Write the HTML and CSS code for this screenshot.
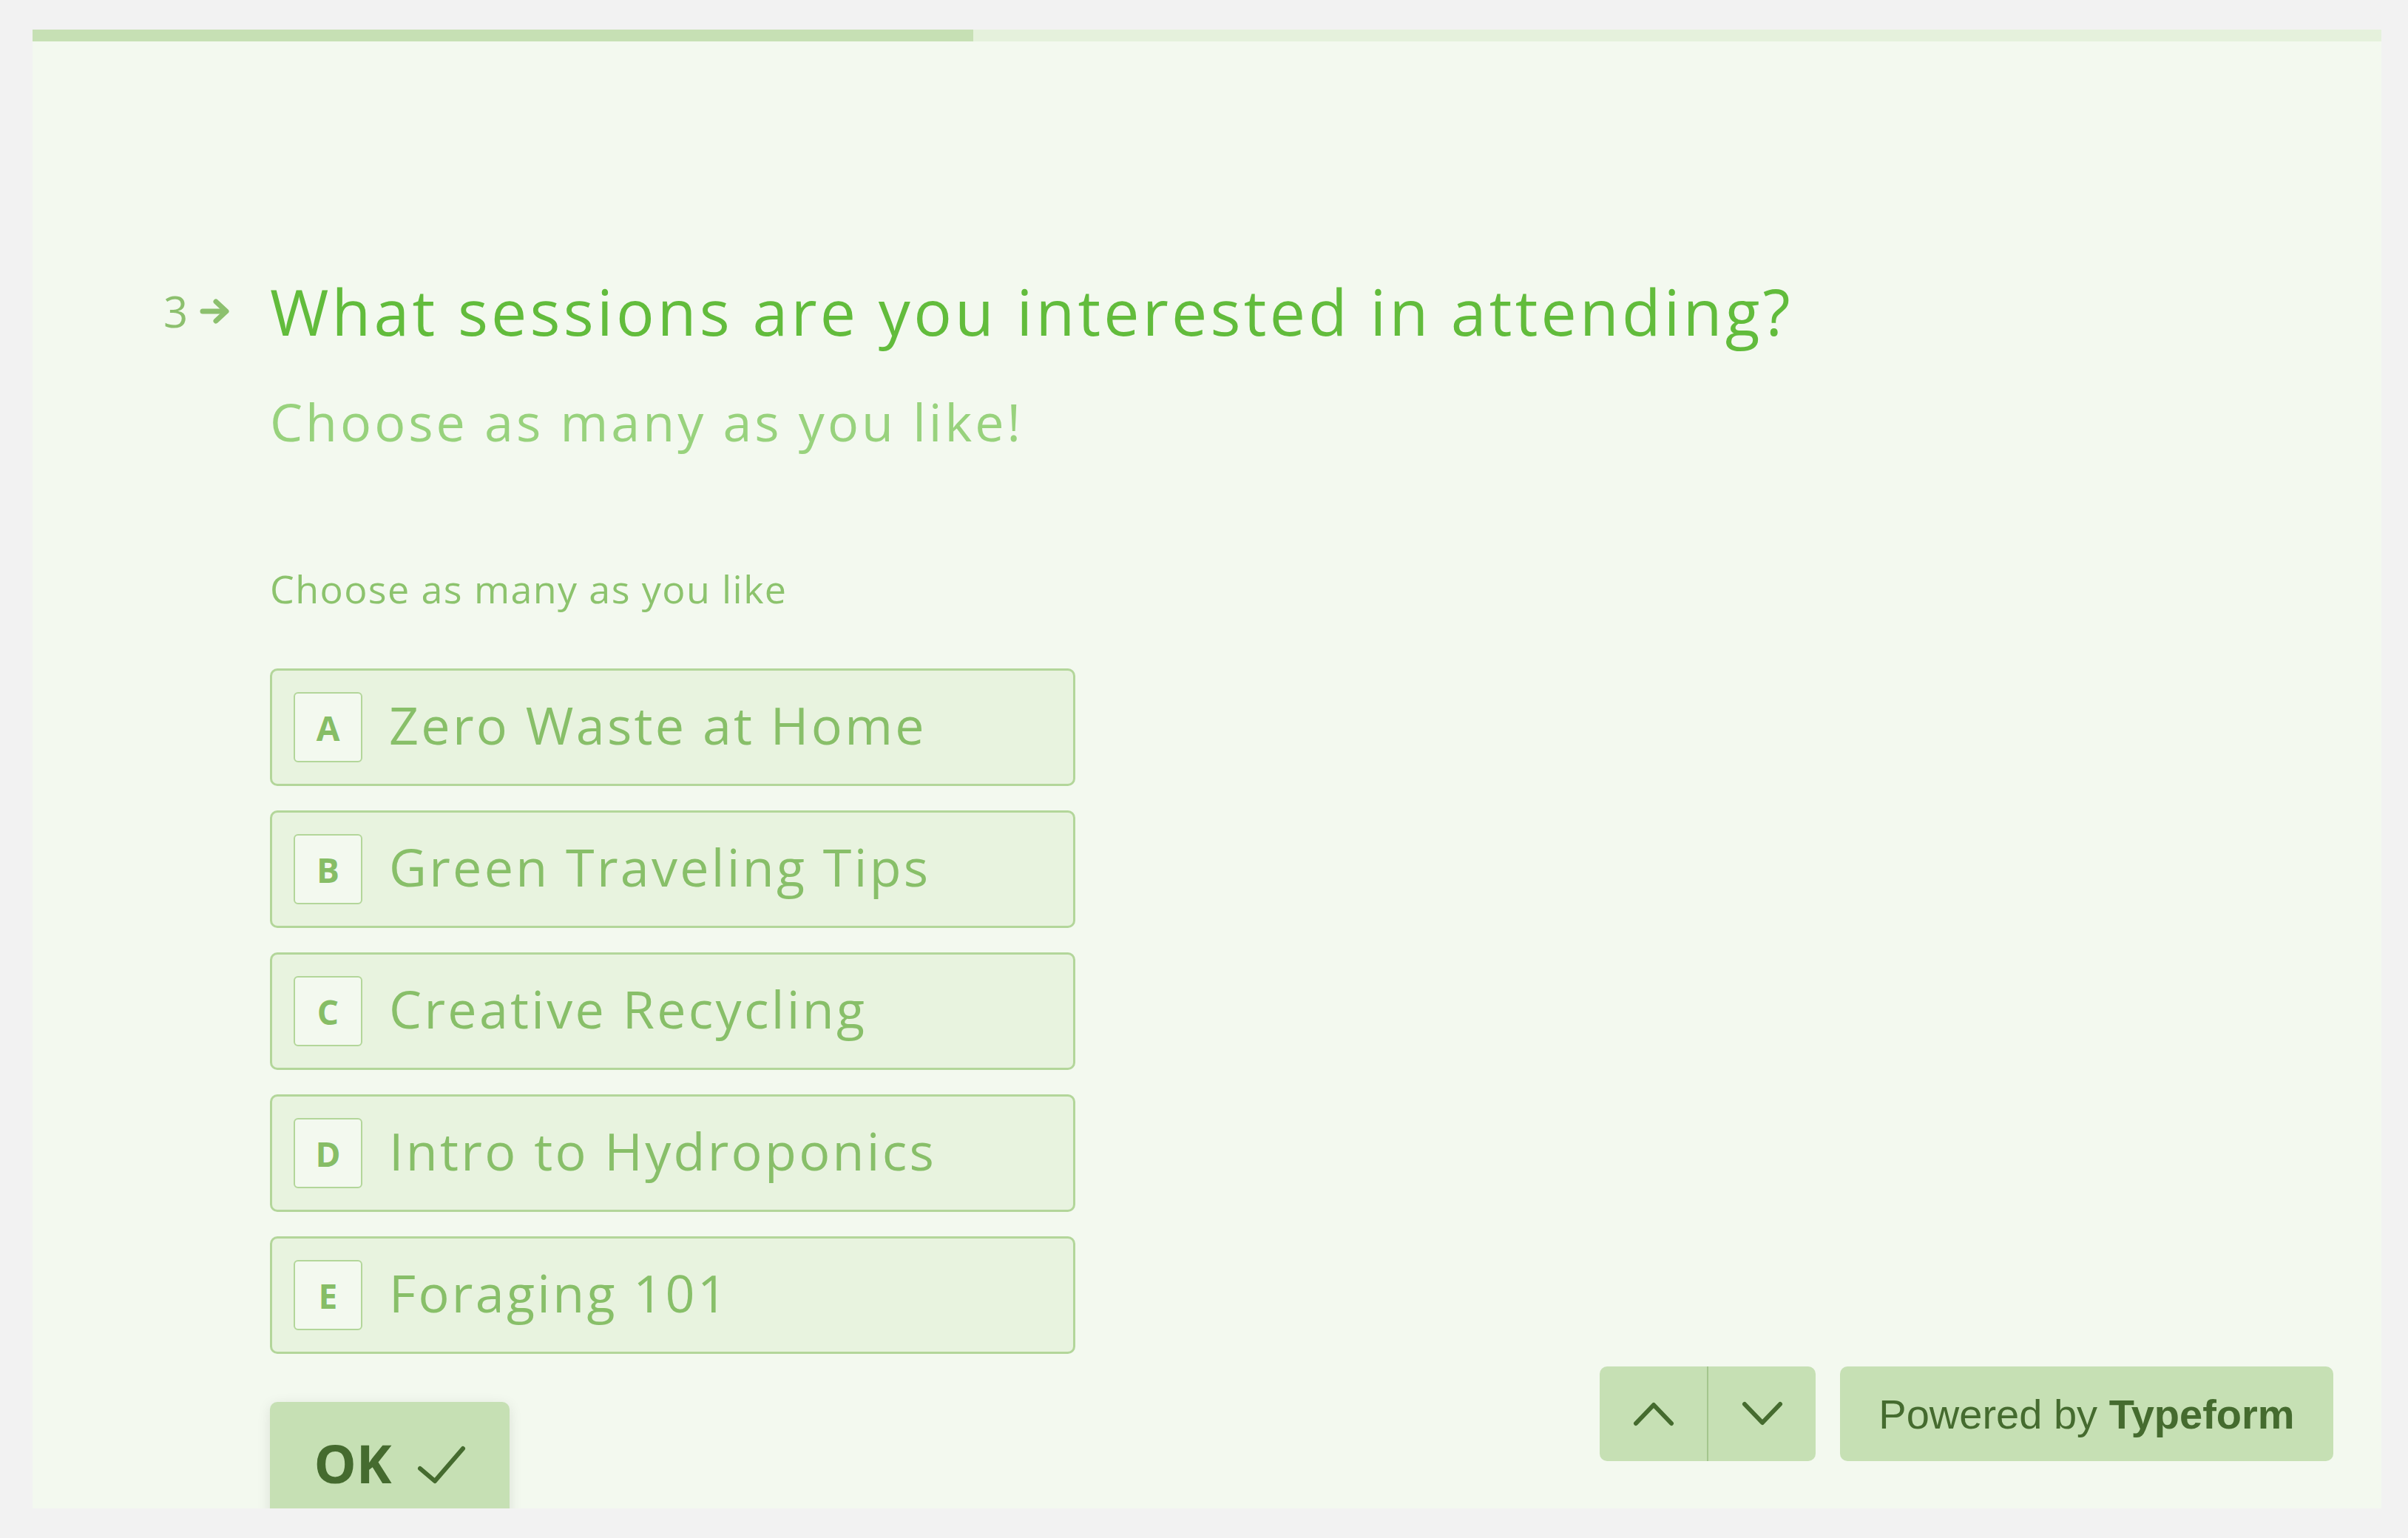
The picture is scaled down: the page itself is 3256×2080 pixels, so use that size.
FILE: index.html
```html
<!DOCTYPE html>
<html lang="en">
<head>
<meta charset="utf-8">
<title>Typeform question</title>
<link rel="stylesheet" href="styles.css">
</head>
<body>
<main class="frame">
  <div class="progress"><div class="progress-fill"></div></div>
  <section class="question">
    <div class="q-number">
      <span class="q-num">3</span>
      <svg class="q-arrow" viewBox="0 0 42 36" width="42" height="36" aria-hidden="true">
        <path d="M4 18 H34" fill="none" stroke="currentColor" stroke-width="7" stroke-linecap="round"/>
        <path d="M22 5 L36 18 L22 31" fill="none" stroke="currentColor" stroke-width="7" stroke-linecap="round" stroke-linejoin="round"/>
      </svg>
    </div>
    <div class="q-body">
      <h1 class="q-title">What sessions are you interested in attending?</h1>
      <p class="q-desc">Choose as many as you like!</p>
      <p class="q-helper">Choose as many as you like</p>
      <ul class="choices">
        <li class="choice"><span class="key">A</span><span class="label">Zero Waste at Home</span></li>
        <li class="choice"><span class="key">B</span><span class="label">Green Traveling Tips</span></li>
        <li class="choice"><span class="key">C</span><span class="label">Creative Recycling</span></li>
        <li class="choice"><span class="key">D</span><span class="label">Intro to Hydroponics</span></li>
        <li class="choice"><span class="key">E</span><span class="label">Foraging 101</span></li>
      </ul>
      <button class="ok" type="button">OK
        <svg class="ok-check" viewBox="0 0 66 52" width="66" height="52" aria-hidden="true">
          <path d="M4 31 L24 48 L62 4" fill="none" stroke="currentColor" stroke-width="6" stroke-linecap="round" stroke-linejoin="round"/>
        </svg>
      </button>
    </div>
  </section>
  <footer class="nav">
    <div class="nav-arrows">
      <button class="nav-btn" type="button" aria-label="Previous">
        <svg viewBox="0 0 56 34" width="56" height="34" aria-hidden="true"><path d="M4 30 L28 5 L52 30" fill="none" stroke="currentColor" stroke-width="6" stroke-linecap="round" stroke-linejoin="round"/></svg>
      </button>
      <span class="nav-divider"></span>
      <button class="nav-btn" type="button" aria-label="Next">
        <svg viewBox="0 0 56 34" width="56" height="34" aria-hidden="true"><path d="M4 4 L28 29 L52 4" fill="none" stroke="currentColor" stroke-width="6" stroke-linecap="round" stroke-linejoin="round"/></svg>
      </button>
    </div>
    <a class="powered">Powered by <b>Typeform</b></a>
  </footer>
</main>
</body>
</html>
```

FILE: styles.css
```css
* { box-sizing: border-box; }
html, body { margin: 0; padding: 0; }
body {
  background: #f2f2f2;
  padding: 40px 36px 40px 44px;
  font-family: "Open Sans", "Noto Sans", sans-serif;
}
.frame {
  position: relative;
  width: 3176px;
  height: 2000px;
  background: #f3f9ef;
  overflow: hidden;
}
.progress {
  height: 16px;
  background: #e5f1dc;
}
.progress-fill {
  width: 1272px;
  height: 100%;
  background: #c6e0b4;
}
.question {
  display: grid;
  grid-template-columns: 144px 1fr;
  padding: 313px 0 0 177px;
}
.q-number {
  display: flex;
  align-items: center;
  gap: 16px;
  height: 104px;
  color: #8cc06e;
}
.q-num {
  font-size: 58px;
  line-height: 1;
}
.q-arrow { display: block; }
.q-title {
  margin: 0;
  font-size: 86px;
  line-height: 104px;
  font-weight: 400;
  letter-spacing: 4.2px;
  color: #62bc3c;
  white-space: nowrap;
}
.q-desc {
  margin: 55px 0 0;
  font-size: 70px;
  line-height: 84px;
  letter-spacing: 4px;
  color: #98d27d;
}
.q-helper {
  margin: 153px 0 0;
  font-size: 52px;
  line-height: 62px;
  letter-spacing: 1.4px;
  color: #8cc36d;
}
.choices {
  list-style: none;
  margin: 77px 0 0;
  padding: 0;
  display: flex;
  flex-direction: column;
  gap: 33px;
}
.choice {
  width: 1089px;
  height: 159px;
  display: flex;
  align-items: center;
  gap: 36px;
  padding: 0 29px;
  background: #e8f3df;
  border: 3px solid #b3d69a;
  border-radius: 10px;
}
.key {
  flex: none;
  width: 93px;
  height: 95px;
  display: flex;
  align-items: center;
  justify-content: center;
  background: #f3f9ef;
  border: 2px solid #b3d69a;
  border-radius: 6px;
  font-size: 46px;
  font-weight: 700;
  color: #86bd66;
}
.label {
  font-size: 70px;
  line-height: 84px;
  letter-spacing: 3.3px;
  padding-bottom: 8px;
  color: #88bf69;
}
.ok {
  margin-top: 65px;
  width: 324px;
  height: 164px;
  display: flex;
  align-items: center;
  justify-content: center;
  gap: 34px;
  padding: 0;
  border: 0;
  border-radius: 10px;
  background: #c6e0b4;
  box-shadow: 0 4px 18px rgba(0, 0, 0, 0.10);
  font-family: "Open Sans", "Noto Sans", sans-serif;
  font-size: 72px;
  font-weight: 700;
  color: #456b2f;
}
.ok-check { display: block; margin-top: 6px; }
.nav {
  position: absolute;
  right: 65px;
  bottom: 64px;
  display: flex;
  gap: 33px;
}
.nav-arrows {
  display: flex;
  height: 128px;
  border-radius: 10px;
  background: #c6e0b4;
  overflow: hidden;
}
.nav-btn {
  width: 145px;
  height: 128px;
  display: flex;
  align-items: center;
  justify-content: center;
  border: 0;
  padding: 0;
  background: transparent;
  color: #456b2f;
}
.nav-btn svg { display: block; }
.nav-divider {
  width: 2px;
  background: #a4c68d;
}
.powered {
  width: 667px;
  height: 128px;
  display: flex;
  align-items: center;
  justify-content: center;
  border-radius: 10px;
  background: #c6e0b4;
  font-family: "Liberation Sans", Arial, sans-serif;
  font-size: 56px;
  color: #456b2f;
  white-space: pre;
}
.powered b { font-weight: 700; }
```
